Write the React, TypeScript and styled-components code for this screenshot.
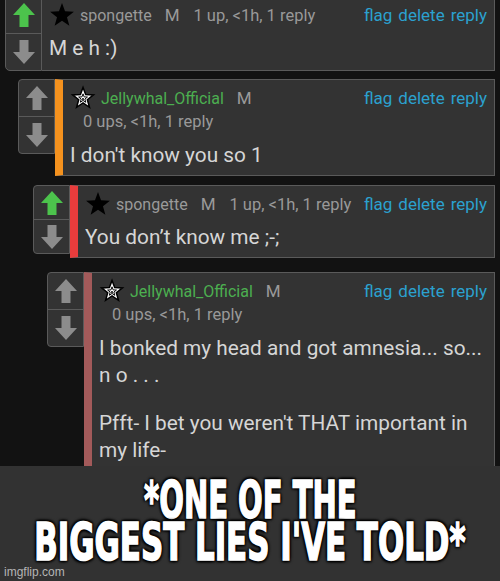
import React from 'react'
import styled, { createGlobalStyle } from 'styled-components'

const Global = createGlobalStyle`
  html, body {
    margin: 0;
    padding: 0;
    background: #121212;
  }
  body {
    font-family: Roboto, "Liberation Sans", sans-serif;
    overflow: hidden;
  }
`

const Page = styled.div`
  width: 500px;
  height: 581px;
  display: flex;
  flex-direction: column;
  overflow: hidden;
`

const Thread = styled.div`
  display: flex;
  flex-direction: column;
  padding-right: 5px;
  height: 466px;
`

const Card = styled.div<{ $indent: number; $top: number }>`
  display: flex;
  align-items: flex-start;
  margin-left: ${(p) => p.$indent}px;
  margin-top: ${(p) => p.$top}px;
`

const VoteBox = styled.div<{ $h: number; $joined?: boolean }>`
  width: 37px;
  height: ${(p) => p.$h}px;
  flex: none;
  display: flex;
  flex-direction: column;
  background: #333;
  border: 1px solid #5a5a5a;
  border-radius: ${(p) => (p.$joined ? '0 0 0 5px' : '4px 0 0 4px')};
  box-sizing: border-box;
`

const VoteHalf = styled.div`
  flex: 1;
  display: flex;
  align-items: center;
  justify-content: center;
  & + & {
    border-top: 1px solid #5a5a5a;
  }
`

const Body = styled.div<{ $bar?: string; $h: number }>`
  flex: 1;
  min-width: 0;
  min-height: ${(p) => p.$h}px;
  box-sizing: border-box;
  background: #333;
  border: 1px solid #5a5a5a;
  border-left: ${(p) => (p.$bar ? `8px solid ${p.$bar}` : 'none')};
  padding: 7px 7px 6px 7px;
`

const Header = styled.div`
  display: flex;
  align-items: center;
  height: 22px;
  font-size: 16px;
  color: #9a9a9a;
  white-space: nowrap;
`

const Name = styled.span<{ $green?: boolean }>`
  margin-left: 5px;
  color: ${(p) => (p.$green ? '#4caf50' : '#9a9a9a')};
`

const Badge = styled.span`
  margin-left: 13px;
  font-size: 17px;
  color: #9a9a9a;
`

const Meta = styled.span`
  margin-left: 14px;
  font-size: 16.5px;
  color: #999;
`

const MetaLine = styled.div`
  margin-top: 2px;
  margin-left: 13px;
  height: 22px;
  line-height: 22px;
  font-size: 16.5px;
  color: #999;
`

const Links = styled.div`
  margin-left: auto;
  display: flex;
  gap: 6px;
  color: #2ba1cf;
  font-size: 17px;
`

const Text = styled.p<{ $gap?: number }>`
  margin: ${(p) => p.$gap ?? 9}px 0 0;
  font-size: 20.8px;
  line-height: 27px;
  color: #d6d6d6;
`

const Caption = styled.div`
  flex: 1;
  position: relative;
  background: #323232;
  display: flex;
  flex-direction: column;
  align-items: center;
  padding-top: 13px;
`

const CaptionLine = styled.div<{ $squeeze: number }>`
  font-family: "DejaVu Sans Condensed", "Liberation Sans", sans-serif;
  font-weight: 700;
  font-size: 52px;
  line-height: 42px;
  color: #fff;
  white-space: nowrap;
  transform: scaleX(${(p) => p.$squeeze});
  -webkit-text-stroke: 1.6px #fff;
  text-shadow: 0 0 3px #000, 2px 2px 3px #000, -2px -2px 3px #000,
    2px -2px 3px #000, -2px 2px 3px #000;
`

const Watermark = styled.span`
  position: absolute;
  left: 4px;
  bottom: 2px;
  font-family: "Liberation Sans", sans-serif;
  font-size: 12px;
  color: #b5b5b5;
`

const Arrow = ({ up, on }: { up?: boolean; on?: boolean }) => (
  <svg width="22" height="24" viewBox="0 0 22 24">
    <path
      d="M11 0 L22 12 L15.5 12 L15.5 24 L6.5 24 L6.5 12 L0 12 Z"
      fill={on ? '#4cc34c' : '#8c8c8c'}
      transform={up ? undefined : 'rotate(180 11 12)'}
    />
  </svg>
)

const STAR =
  '12,1 14.8,8.6 23,8.9 16.6,14 18.8,22 12,17.4 5.2,22 7.4,14 1,8.9 9.2,8.6'

const Star = ({ hollow }: { hollow?: boolean }) =>
  hollow ? (
    <svg width="26" height="26" viewBox="0 0 24 24">
      <polygon points={STAR} fill="#fff" stroke="#000" strokeWidth="1.6" transform="translate(1.6 1.4) scale(0.87)" />
      <polygon points={STAR} fill="none" stroke="#000" strokeWidth="2.4" transform="translate(7.6 7.8) scale(0.37)" />
      <circle cx="12" cy="13" r="0.9" fill="#000" />
    </svg>
  ) : (
    <svg width="26" height="26" viewBox="0 0 24 24">
      <polygon points={STAR} fill="#000" />
    </svg>
  )

type Props = {
  indent: number
  top: number
  voteH: number
  bodyH: number
  bar?: string
  up?: boolean
  jelly?: boolean
  meta: string
  joined?: boolean
  children: React.ReactNode
}

const Comment = ({ indent, top, voteH, bodyH, bar, up, jelly, meta, joined, children }: Props) => (
  <Card $indent={indent} $top={top}>
    <VoteBox $h={voteH} $joined={joined}>
      <VoteHalf>
        <Arrow up on={up} />
      </VoteHalf>
      <VoteHalf>
        <Arrow />
      </VoteHalf>
    </VoteBox>
    <Body $bar={bar} $h={bodyH}>
      <Header>
        <Star hollow={jelly} />
        <Name $green={jelly}>{jelly ? 'Jellywhal_Official' : 'spongette'}</Name>
        <Badge>M</Badge>
        {!jelly && <Meta>{meta}</Meta>}
        <Links>
          <span>flag</span>
          <span>delete</span>
          <span>reply</span>
        </Links>
      </Header>
      {jelly && <MetaLine>{meta}</MetaLine>}
      {children}
    </Body>
  </Card>
)

export default function App() {
  return (
    <Page>
      <Global />
      <Thread>
        <Comment indent={5} top={-4} voteH={75} bodyH={75} up meta="1 up, <1h, 1 reply" joined>
          <Text>M e h :)</Text>
        </Comment>
        <Comment indent={18} top={8} voteH={75} bodyH={97} bar="#f5921e" jelly meta="0 ups, <1h, 1 reply">
          <Text>I don't know you so 1</Text>
        </Comment>
        <Comment indent={33} top={9} voteH={69} bodyH={69} bar="#e83c3c" up meta="1 up, <1h, 1 reply">
          <Text>You don’t know me ;-;</Text>
        </Comment>
        <Comment indent={47} top={14} voteH={75} bodyH={198} bar="#a35a5a" jelly meta="0 ups, <1h, 1 reply">
          <Text>
            I bonked my head and got amnesia... so...
            <br />n o . . .
          </Text>
          <Text $gap={21}>Pfft- I bet you weren't THAT important in my life-</Text>
        </Comment>
      </Thread>
      <Caption>
        <CaptionLine $squeeze={0.62}>*ONE OF THE</CaptionLine>
        <CaptionLine $squeeze={0.66}>BIGGEST LIES I'VE TOLD*</CaptionLine>
        <Watermark>imgflip.com</Watermark>
      </Caption>
    </Page>
  )
}
